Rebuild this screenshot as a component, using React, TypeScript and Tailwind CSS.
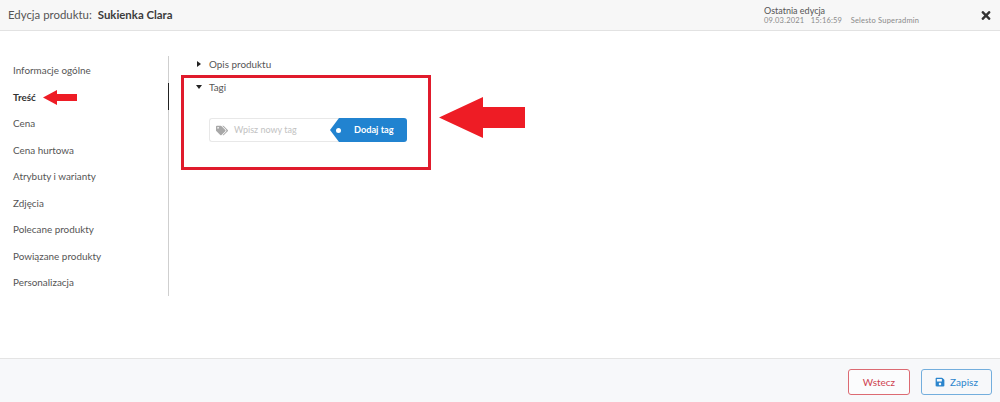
import { FaTags, FaSave, FaTimes } from "react-icons/fa";

const items = ["Informacje ogólne", "Treść", "Cena", "Cena hurtowa", "Atrybuty i warianty", "Zdjęcia", "Polecane produkty", "Powiązane produkty", "Personalizacja"];

export default function App() {
  return (
    <div className="relative w-[1000px] h-[402px] bg-white overflow-hidden flex flex-col text-[#444] font-['Lato','Noto_Sans',sans-serif]">
      <header className="h-[31px] shrink-0 bg-[#f7f7f7] border-b border-[#e2e2e2] flex items-center pl-2 pr-[8px]">
        <span className="text-[11.4px] text-[#555]">Edycja produktu:</span>
        <span className="text-[11.4px] font-bold text-[#3c3c3c] ml-[6px]">Sukienka Clara</span>
        <div className="ml-auto w-[216px] flex flex-col leading-[10px] mt-[1px]">
          <span className="text-[9px] leading-[10px] text-[#555]">Ostatnia edycja</span>
          <span className="text-[7.5px] leading-[10px] text-[#8a8a8a] tracking-[0.2px] whitespace-pre">09.03.2021   15:16:59    Selesto Superadmin</span>
        </div>
        <FaTimes className="text-[#333] w-[12px] h-[13px]" />
      </header>

      <main className="flex-1 flex pt-[25px]">
        <nav className="w-[169px] h-[240px] shrink-0 border-r border-[#cfcfcf] relative flex flex-col pl-[13px] pt-[1.4px]">
          {items.map((t) => (
            <div key={t} className={`h-[26.6px] flex items-center text-[9.9px] ${t === "Treść" ? "font-bold text-[#333]" : "text-[#555]"}`}>
              {t}
            </div>
          ))}
          <div className="absolute right-[-1px] top-[27px] w-[1px] h-[27px] bg-[#222]" />
        </nav>

        <section className="pl-[28px] flex flex-col">
          <div className="flex items-center h-[16px] text-[9.9px] text-[#555]">
            <span className="w-0 h-0 border-y-[3px] border-y-transparent border-l-[4px] border-l-[#222]" />
            <span className="ml-[8px]">Opis produktu</span>
          </div>
          <div className="flex items-center h-[16px] mt-[7px] text-[9.9px] text-[#555]">
            <span className="w-0 h-0 border-x-[3px] border-x-transparent border-t-[4px] border-t-[#222] -ml-[1px]" />
            <span className="ml-[7px]">Tagi</span>
          </div>
          <div className="flex mt-[23px] ml-[12px] h-[24px] w-[198px]">
            <div className="flex-1 flex items-center border border-[#e8e8e8] border-r-0 rounded-l-[3px] pl-[6px]">
              <FaTags className="w-[12px] h-[11px] text-[#a8a8a8]" />
              <span className="ml-[6px] text-[9px] text-[#c2c2c2]">Wpisz nowy tag</span>
            </div>
            <div className="relative w-[68px] h-[24px] bg-[#2183d0] rounded-r-[3px] flex items-center text-white text-[9.2px] font-bold pl-[15px]">
              <span className="absolute left-[-9px] top-0 w-0 h-0 border-y-[12px] border-y-transparent border-r-[9px] border-r-[#2183d0]" />
              <span className="absolute left-[-3px] top-[9.5px] w-[5px] h-[5px] rounded-full bg-white" />
              Dodaj tag
            </div>
          </div>
        </section>
      </main>

      <footer className="h-[44px] shrink-0 bg-[#f7f8fa] border-t border-[#e4e4e4] flex items-start justify-end gap-[11px] pt-[10px] pr-[8px]">
        <button className="w-[62px] h-[26px] rounded-[3px] border border-[#dc6a72] text-[#cf4350] text-[10px] bg-white/50">Wstecz</button>
        <button className="w-[71px] h-[26px] rounded-[3px] border border-[#73aedd] text-[#2b85cd] text-[10px] flex items-center justify-center gap-[5px]">
          <FaSave className="w-[10px] h-[10px]" />
          Zapisz
        </button>
      </footer>

      <div className="absolute left-[181px] top-[75px] w-[250px] h-[95px] border-[3px] border-[#e01b2c]" />
      <svg className="absolute left-[439px] top-[97px]" width="86" height="41" viewBox="0 0 86 41">
        <polygon points="0,20.5 44,0 44,10 86,10 86,31 44,31 44,41" fill="#ee1c25" />
      </svg>
      <svg className="absolute left-[43px] top-[90px]" width="34" height="15" viewBox="0 0 34 15">
        <polygon points="0,7.5 14,0 14,4 34,4 34,11 14,11 14,15" fill="#ee1c25" />
      </svg>
    </div>
  );
}
